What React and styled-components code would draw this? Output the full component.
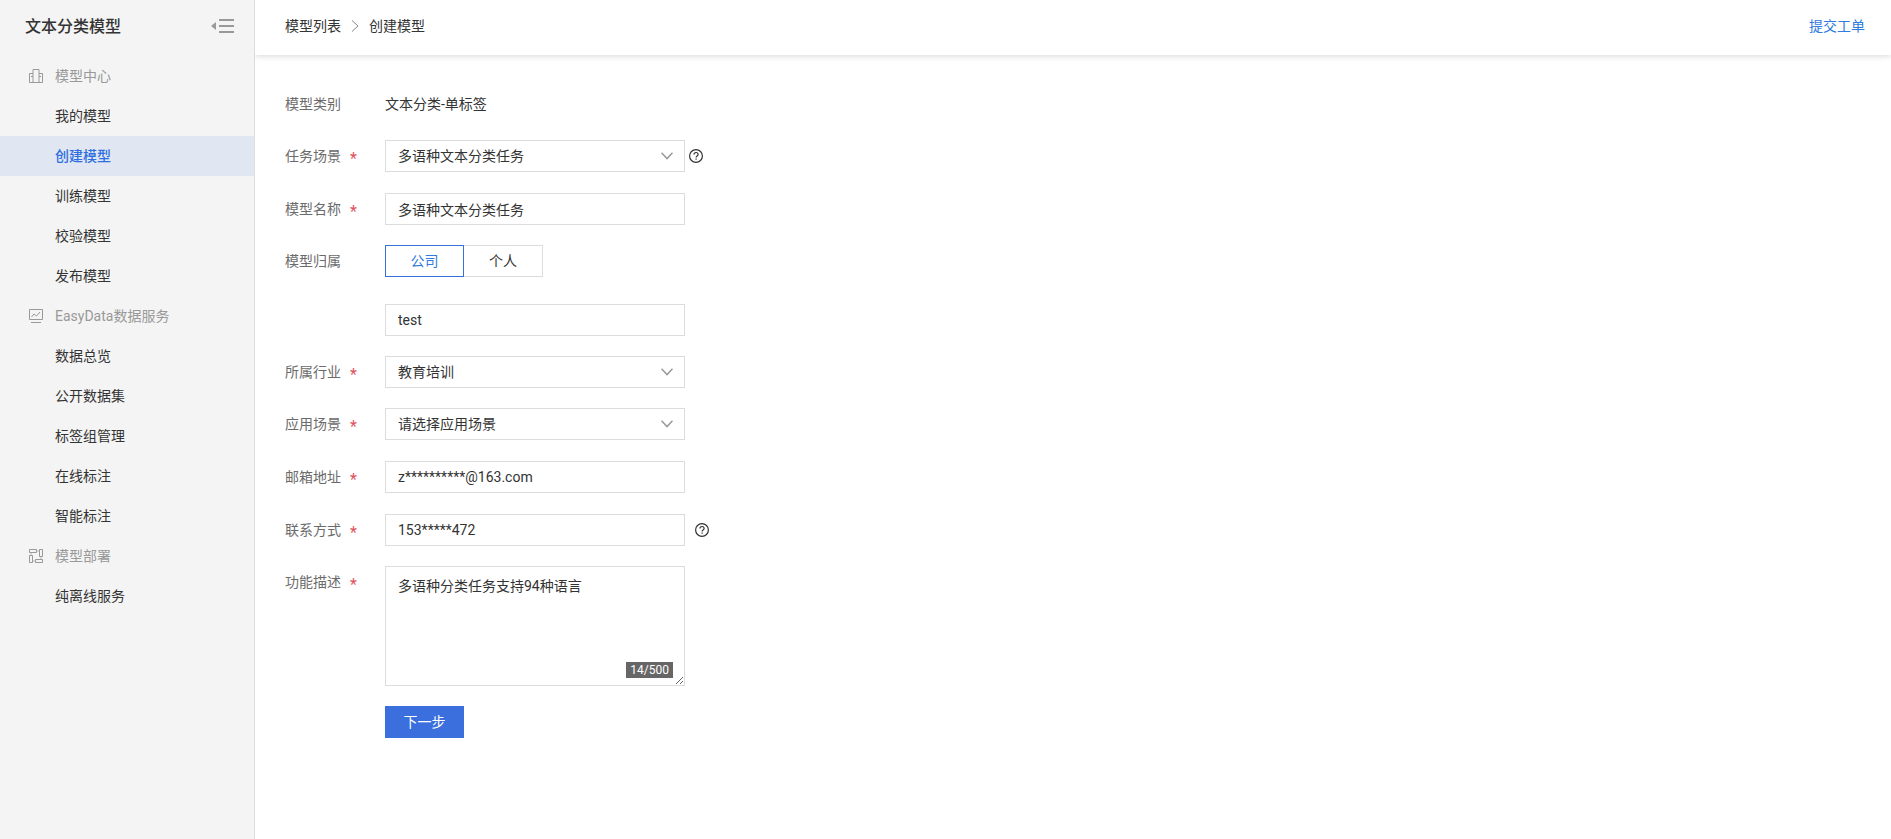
import React, { useState } from 'react';
import styled, { createGlobalStyle } from 'styled-components';

const GlobalStyle = createGlobalStyle`
  * {
    box-sizing: border-box;
  }

  body {
    margin: 0;
    background: #fff;
    color: #333;
    font-family: Roboto, 'Noto Sans CJK SC', sans-serif;
    font-size: 14px;
  }

  button,
  input,
  select,
  textarea {
    font-family: inherit;
    font-size: inherit;
    color: inherit;
  }
`;

const Layout = styled.div`
  display: flex;
  min-height: 100vh;
`;

const Sidebar = styled.aside`
  flex: 0 0 255px;
  background: #f4f4f4;
  border-right: 1px solid #dcdcdc;
`;

const SidebarHeader = styled.div`
  display: flex;
  align-items: center;
  justify-content: space-between;
  height: 52px;
  margin-bottom: 4px;
  padding: 0 20px 0 25px;
`;

const SidebarTitle = styled.h1`
  margin: 0;
  padding-top: 2px;
  font-size: 16px;
  font-weight: 500;
  line-height: 52px;
`;

const CollapseButton = styled.button`
  display: flex;
  padding: 0;
  border: none;
  background: none;
  cursor: pointer;
`;

const GroupTitle = styled.div`
  display: flex;
  align-items: center;
  gap: 12px;
  height: 40px;
  padding-left: 29px;
  line-height: 40px;
  color: #999;
`;

const NavLink = styled.a`
  display: block;
  padding-left: 55px;
  line-height: 40px;
  color: ${props => (props.$active ? '#2f6fdf' : '#333')};
  font-weight: ${props => (props.$active ? 500 : 400)};
  background: ${props => (props.$active ? '#e0e6f2' : 'transparent')};
  text-decoration: none;
`;

const Main = styled.main`
  flex: 1;
  min-width: 0;
`;

const TopBar = styled.header`
  display: flex;
  justify-content: space-between;
  height: 55px;
  padding: 0 26px 0 30px;
  line-height: 52px;
  box-shadow: 0 1px 6px rgba(0, 0, 0, 0.16);
  clip-path: inset(0 0 -10px 0);
`;

const Breadcrumb = styled.nav`
  display: flex;
  gap: 10px;

  svg {
    margin-top: 20px;
  }
`;

const CrumbLink = styled.a`
  color: #333;
  text-decoration: none;
`;

const TicketLink = styled.a`
  color: #2f7be0;
  text-decoration: none;
`;

const Form = styled.form`
  padding: 33px 30px;
`;

const Row = styled.div`
  display: flex;
  align-items: flex-start;
  margin-bottom: ${props => props.$gap || 20}px;
`;

const Label = styled.label`
  display: flex;
  flex: 0 0 100px;
  height: 32px;
  line-height: 32px;
  color: #6b6b6b;
`;

const Star = styled.span`
  padding-top: 3px;
  margin-left: 9px;
  color: #e0525c;
  font-size: 16px;
`;

const StaticText = styled.span`
  line-height: 32px;
`;

const Input = styled.input`
  width: 300px;
  height: 32px;
  padding: 0 12px;
  border: 1px solid #dcdcdc;
  border-radius: 0;
  background: #fff;
  line-height: 30px;
  outline: none;

  &:focus {
    border-color: #3670dd;
  }
`;

const SelectWrap = styled.div`
  position: relative;
  width: 300px;

  svg {
    position: absolute;
    top: 12px;
    right: 12px;
    pointer-events: none;
  }
`;

const SelectBox = styled.select`
  display: block;
  width: 100%;
  height: 32px;
  padding: 0 32px 0 12px;
  border: 1px solid #dcdcdc;
  border-radius: 0;
  background: #fff;
  line-height: 30px;
  appearance: none;
  outline: none;
`;

const HelpButton = styled.button`
  display: flex;
  align-items: center;
  height: 32px;
  margin-left: ${props => props.$offset}px;
  padding: 0;
  border: none;
  background: none;
  cursor: pointer;
`;

const Segment = styled.button`
  width: 79px;
  height: 32px;
  padding: 0;
  border: 1px solid ${props => (props.$active ? '#3670dd' : '#dcdcdc')};
  border-left-width: ${props => (props.$active ? 1 : 0)}px;
  background: #fff;
  color: ${props => (props.$active ? '#2f7be0' : '#333')};
  line-height: 30px;
  cursor: pointer;
`;

const TextAreaWrap = styled.div`
  position: relative;
  display: flex;
`;

const TextArea = styled.textarea`
  width: 300px;
  height: 120px;
  padding: 9px 12px;
  border: 1px solid #dcdcdc;
  background: #fff;
  line-height: 20px;
  outline: none;
`;

const Counter = styled.span`
  position: absolute;
  right: 12px;
  bottom: 8px;
  padding: 0 4px;
  background: #666;
  color: #fff;
  font-size: 12px;
  line-height: 16px;
`;

const SubmitButton = styled.button`
  width: 79px;
  height: 32px;
  margin-left: 100px;
  padding: 0;
  border: none;
  background: #3a6fdd;
  color: #fff;
  line-height: 32px;
  cursor: pointer;
`;

const CenterIcon = () => (
  <svg width="14" height="14" viewBox="0 0 14 14" fill="none" stroke="#999">
    <path d="M4 13.5V.5h6v13M4 4.5H.5v9h13v-9H10M2 7.5h2M10 7.5h2" />
  </svg>
);

const DataIcon = () => (
  <svg width="14" height="14" viewBox="0 0 14 14" fill="none" stroke="#999">
    <path d="M.5.5h13v10H.5zM2 13.5h10" />
    <path d="M2.5 8l2.5-3 2.5 2 3.5-4" />
  </svg>
);

const DeployIcon = () => (
  <svg width="14" height="14" viewBox="0 0 14 14" fill="none" stroke="#999">
    <path d="M.5.5h7v3h-7zM10.5.5h3v7h-3zM.5 6.5h3v7h-3zM6.5 10.5h7v3h-7z" />
    <path d="M7.5 2h3M2 3.5v3M3.5 12h3M12 7.5v3" strokeOpacity="0.6" />
  </svg>
);

const CollapseIcon = () => (
  <svg width="23" height="14" viewBox="0 0 23 14" fill="#999">
    <path d="M5 3v8L0 7zM8 0h15v2H8zM8 6h15v2H8zM8 12h15v2H8z" />
  </svg>
);

const CrumbArrow = () => (
  <svg width="8" height="12" viewBox="0 0 8 12" fill="none" stroke="#888">
    <path d="M1 .5L7 6 1 11.5" />
  </svg>
);

const SelectArrow = () => (
  <svg width="12" height="8" viewBox="0 0 12 8" fill="none" stroke="#999" strokeWidth="1.5">
    <path d="M.5.8L6 6.6 11.5.8" />
  </svg>
);

const Help = ({ offset }) => (
  <HelpButton type="button" aria-label="帮助" $offset={offset}>
    <svg width="14" height="14" viewBox="0 0 14 14" fill="none" stroke="#333" strokeWidth="1.2">
      <circle cx="7" cy="7" r="6.4" />
      <path d="M4.9 5.6c0-1.3.9-2.1 2.1-2.1s2.1.8 2.1 1.9c0 1.5-2 1.6-2 3.1" />
      <path d="M7.1 9.5v1.2" />
    </svg>
  </HelpButton>
);

const Field = ({ id, label, required, gap, children }) => (
  <Row $gap={gap}>
    <Label htmlFor={id}>
      {label}
      {required && <Star>*</Star>}
    </Label>
    {children}
  </Row>
);

const Select = ({ id, options }) => (
  <SelectWrap>
    <SelectBox id={id}>
      {options.map(option => (
        <option key={option}>{option}</option>
      ))}
    </SelectBox>
    <SelectArrow />
  </SelectWrap>
);

const menu = [
  {
    title: '模型中心',
    icon: <CenterIcon />,
    items: ['我的模型', '创建模型', '训练模型', '校验模型', '发布模型'],
  },
  {
    title: 'EasyData数据服务',
    icon: <DataIcon />,
    items: ['数据总览', '公开数据集', '标签组管理', '在线标注', '智能标注'],
  },
  {
    title: '模型部署',
    icon: <DeployIcon />,
    items: ['纯离线服务'],
  },
];

const owners = ['公司', '个人'];

const App = () => {
  const [owner, setOwner] = useState('公司');
  const [description, setDescription] = useState('多语种分类任务支持94种语言');

  return (
    <>
      <GlobalStyle />
      <Layout>
        <Sidebar>
          <SidebarHeader>
            <SidebarTitle>文本分类模型</SidebarTitle>
            <CollapseButton aria-label="收起菜单">
              <CollapseIcon />
            </CollapseButton>
          </SidebarHeader>
          <nav>
            {menu.map(group => (
              <div key={group.title}>
                <GroupTitle>
                  {group.icon}
                  {group.title}
                </GroupTitle>
                {group.items.map(item => (
                  <NavLink key={item} href="#" $active={item === '创建模型'}>
                    {item}
                  </NavLink>
                ))}
              </div>
            ))}
          </nav>
        </Sidebar>

        <Main>
          <TopBar>
            <Breadcrumb>
              <CrumbLink href="#">模型列表</CrumbLink>
              <CrumbArrow />
              <span>创建模型</span>
            </Breadcrumb>
            <TicketLink href="#">提交工单</TicketLink>
          </TopBar>

          <Form onSubmit={e => e.preventDefault()}>
            <Field label="模型类别">
              <StaticText>文本分类-单标签</StaticText>
            </Field>
            <Field id="task" label="任务场景" required gap={21}>
              <Select id="task" options={['多语种文本分类任务']} />
              <Help offset={4} />
            </Field>
            <Field id="name" label="模型名称" required>
              <Input id="name" defaultValue="多语种文本分类任务" />
            </Field>
            <Field id="company" label="模型归属" gap={27}>
              {owners.map(item => (
                <Segment
                  key={item}
                  type="button"
                  $active={item === owner}
                  onClick={() => setOwner(item)}
                >
                  {item}
                </Segment>
              ))}
            </Field>
            <Field id="company">
              <Input id="company" defaultValue="test" />
            </Field>
            <Field id="industry" label="所属行业" required>
              <Select id="industry" options={['教育培训']} />
            </Field>
            <Field id="scene" label="应用场景" required gap={21}>
              <Select id="scene" options={['请选择应用场景']} />
            </Field>
            <Field id="email" label="邮箱地址" required gap={21}>
              <Input id="email" defaultValue="z**********@163.com" />
            </Field>
            <Field id="phone" label="联系方式" required>
              <Input id="phone" defaultValue="153*****472" />
              <Help offset={10} />
            </Field>
            <Field id="description" label="功能描述" required>
              <TextAreaWrap>
                <TextArea
                  id="description"
                  maxLength={500}
                  value={description}
                  onChange={e => setDescription(e.target.value)}
                />
                <Counter>{description.length}/500</Counter>
              </TextAreaWrap>
            </Field>
            <SubmitButton type="submit">下一步</SubmitButton>
          </Form>
        </Main>
      </Layout>
    </>
  );
};

export default App;
